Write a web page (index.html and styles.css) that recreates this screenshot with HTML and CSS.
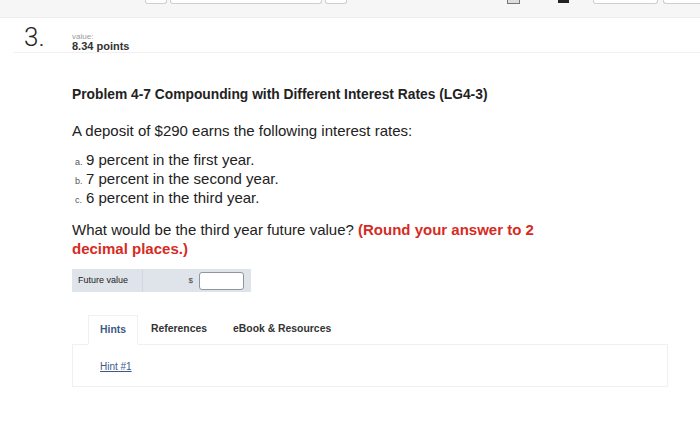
FILE: index.html
```html
<!DOCTYPE html>
<html lang="en">
<head>
    <meta charset="UTF-8">
    <title>Question 3</title>
    <link rel="stylesheet" href="styles.css">
</head>
<body>
    <div class="topbar">
        <div class="nav-left">
            <span class="tb-btn small"></span>
            <span class="tb-btn wide"></span>
            <span class="tb-btn small"></span>
        </div>
        <div class="nav-right">
            <span class="tb-icon light"></span>
            <span class="tb-icon dark"></span>
            <span class="tb-btn pill"></span>
            <span class="tb-btn pill2"></span>
        </div>
    </div>

    <div class="q-head">
        <div class="q-num">3.</div>
        <div class="q-value">
            <div class="value-label">value:</div>
            <div class="value-points">8.34 points</div>
        </div>
    </div>

    <div class="q-body">
        <h2 class="q-title">Problem 4-7 Compounding with Different Interest Rates (LG4-3)</h2>
        <p class="q-text intro">A deposit of $290 earns the following interest rates:</p>
        <ol class="q-list">
            <li><span class="marker">a.</span>9 percent in the first year.</li>
            <li><span class="marker">b.</span>7 percent in the second year.</li>
            <li><span class="marker">c.</span>6 percent in the third year.</li>
        </ol>
        <p class="q-text question">What would be the third year future value? <strong class="round">(Round your answer to 2 decimal places.)</strong></p>

        <div class="answer">
            <div class="answer-label">Future value</div>
            <div class="answer-cell">
                <span class="dollar">$</span>
                <input type="text" class="answer-input">
            </div>
        </div>

        <div class="tabs">
            <div class="tab active">Hints</div>
            <div class="tab">References</div>
            <div class="tab">eBook &amp; Resources</div>
        </div>
        <div class="tab-panel">
            <a href="#" class="hint-link">Hint #1</a>
        </div>
    </div>
</body>
</html>
```

FILE: styles.css
```css
body {
    margin: 0;
    font-family: "Liberation Sans", Arial, sans-serif;
    color: #333;
    background: #fff;
}
.topbar {
    height: 17px;
    background: #f6f6f6;
    border-bottom: 1px solid #ececec;
    display: flex;
    justify-content: space-between;
}
.nav-left, .nav-right {
    display: flex;
    align-items: flex-start;
    gap: 3px;
}
.nav-left {
    margin-left: 145px;
}
.tb-btn {
    display: block;
    height: 3px;
    background: #fff;
    border: 1px solid #cfcfcf;
    border-top: none;
    border-radius: 0 0 3px 3px;
}
.tb-btn.small { width: 20px; }
.tb-btn.wide { width: 150px; }
.tb-btn.pill { width: 63px; margin-left: 21px; }
.tb-btn.pill2 { width: 36px; margin-left: 2px; border-right: none; border-radius: 0 0 0 3px; }
.tb-icon {
    display: block;
    width: 11px;
    height: 3px;
}
.tb-icon.light {
    border: 1px solid #777;
    border-top: none;
    background: #ddd;
    margin-right: 35px;
}
.tb-icon.dark {
    background: #222;
}

.q-head {
    display: flex;
    margin-left: 14px;
    padding: 6px 0 0;
    border-bottom: 1px solid #f0f0f0;
}
.q-num {
    width: 58px;
    padding-left: 10px;
    box-sizing: border-box;
    font-family: Roboto, "Liberation Sans", sans-serif;
    font-weight: 300;
    font-size: 26px;
    line-height: 26px;
    color: #222;
}
.q-value {
    padding-top: 8px;
}
.value-label {
    font-size: 8px;
    color: #999;
    line-height: 9px;
}
.value-points {
    font-size: 11px;
    font-weight: bold;
    color: #333;
    line-height: 11px;
}

.q-body {
    margin-left: 72px;
    margin-right: 32px;
}
.q-title {
    font-size: 13.8px;
    font-weight: bold;
    color: #222;
    margin: 33px 0 0;
    line-height: 18px;
}
.q-text {
    font-size: 15px;
    line-height: 19px;
    color: #222;
}
.q-text.intro {
    margin: 17px 0 0;
}
.q-text.question {
    max-width: 470px;
    margin: 13px 0 0;
}
.q-list {
    list-style: none;
    padding: 0 0 0 3px;
    margin: 10px 0 0;
    font-size: 15px;
    line-height: 19px;
    color: #222;
}
.marker {
    font-size: 9px;
    line-height: 1;
    color: #555;
    display: inline-block;
    width: 11px;
}
.round {
    color: #d62b1f;
}
.answer {
    display: flex;
    width: 179px;
    height: 23px;
    margin-top: 11px;
    background: #dfe3ea;
}
.answer-label {
    width: 71px;
    border-right: 1px solid #d3d8e0;
    font-size: 9px;
    line-height: 23px;
    padding-left: 6px;
    color: #222;
    box-sizing: border-box;
}
.answer-cell {
    flex: 1;
    display: flex;
    align-items: center;
    justify-content: flex-end;
    padding-right: 7px;
}
.dollar {
    font-size: 8px;
    color: #444;
    margin-right: 6px;
}
.answer-input {
    width: 45px;
    height: 18px;
    box-sizing: border-box;
    border: 1px solid #8f96a0;
    border-radius: 3px;
    background: #fff;
    padding: 0;
}

.tabs {
    display: flex;
    margin-top: 23px;
    margin-left: 16px;
}
.tab {
    font-size: 10.4px;
    font-weight: bold;
    color: #333;
    padding: 0 13px;
    line-height: 28px;
}
.tab.active {
    color: #3e5a87;
    border: 1px solid #f0f0f0;
    border-bottom: 1px solid #fff;
    margin-bottom: -1px;
    padding: 0 11px;
    background: #fff;
}
.tab-panel {
    border: 1px solid #f0f0f0;
    height: 43px;
    padding: 14px 0 0 27px;
    box-sizing: border-box;
    line-height: 12px;
}
.hint-link {
    font-size: 10px;
    color: #3e5a87;
}
```
